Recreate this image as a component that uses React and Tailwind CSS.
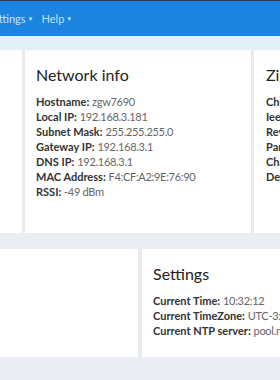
import React from "react";

const font = { fontFamily: 'Lato, "Open Sans", sans-serif' };

function Row({ label, value }) {
  return (
    <div className="whitespace-nowrap">
      <span className="font-bold text-[#333]">{label}</span>{" "}
      <span className="text-[#666] tracking-[-0.3px]">{value}</span>
    </div>
  );
}

export default function App() {
  return (
    <div className="w-[280px] h-[380px] overflow-hidden bg-[#eaeef3] text-[11px] leading-[15px]" style={font}>
      <div className="h-[1px] bg-[#2d3e50]" />
      <div className="h-[35px] bg-[#1d83e0] flex items-center overflow-hidden">
        <div className="flex items-center gap-[8px] -ml-[13px] text-[11px] text-[#c4e1fa]">
          <span className="flex items-center gap-[2px]">Settings<span className="text-[6px]">▼</span></span>
          <span className="flex items-center gap-[2px]">Help<span className="text-[6px]">▼</span></span>
        </div>
      </div>
      <div className="h-[14px] bg-[#e4f0f8]" />
      <div className="flex h-[183px] gap-[1px] overflow-hidden">
        <div className="w-[23px] shrink-0 bg-white border-r border-[#e6e9ed]" />
        <div className="w-[228px] shrink-0 bg-white border-x border-[#e6e9ed] pl-[11px] pt-[14px]">
          <div className="text-[16px] leading-[22px] text-[#222] mb-[8px]">Network info</div>
          <Row label="Hostname:" value="zgw7690" />
          <Row label="Local IP:" value="192.168.3.181" />
          <Row label="Subnet Mask:" value="255.255.255.0" />
          <Row label="Gateway IP:" value="192.168.3.1" />
          <Row label="DNS IP:" value="192.168.3.1" />
          <Row label="MAC Address:" value="F4:CF:A2:9E:76:90" />
          <Row label="RSSI:" value="-49 dBm" />
        </div>
        <div className="flex-1 bg-white border-l border-[#e6e9ed] pl-[12px] pt-[14px] overflow-hidden">
          <div className="text-[16px] leading-[22px] text-[#222] mb-[8px]">Zigbee</div>
          <Row label="Chip" value="" />
          <Row label="Ieee" value="" />
          <Row label="Revision" value="" />
          <Row label="Partition" value="" />
          <Row label="Channel" value="" />
          <Row label="Device" value="" />
        </div>
      </div>
      <div className="h-[16px]" />
      <div className="flex h-[108px] gap-[2px] overflow-hidden">
        <div className="w-[139px] shrink-0 bg-white border-r border-[#e6e9ed]" />
        <div className="flex-1 bg-white border-l border-[#e6e9ed] pl-[11px] pt-[14px] overflow-hidden">
          <div className="text-[16px] leading-[22px] text-[#222] mb-[8px]">Settings</div>
          <Row label="Current Time:" value="10:32:12" />
          <Row label="Current TimeZone:" value="UTC-3:00" />
          <Row label="Current NTP server:" value="pool.ntp.org" />
        </div>
      </div>
    </div>
  );
}
